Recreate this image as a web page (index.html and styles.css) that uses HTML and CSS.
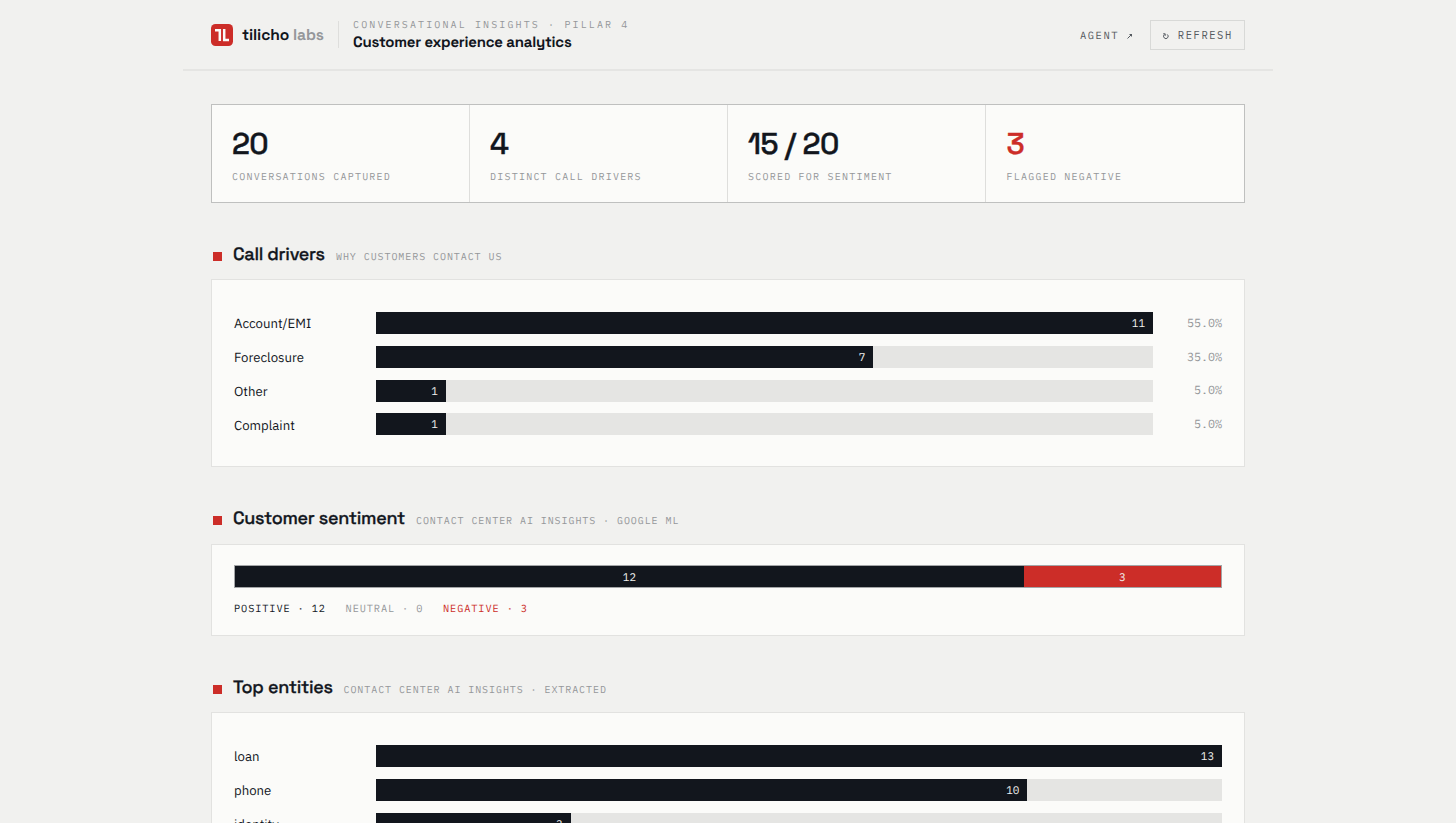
FILE: index.html
```
<!DOCTYPE html>
<html lang="en">
<head>
<meta charset="utf-8">
<title>Customer experience analytics</title>
<link rel="stylesheet" href="styles.css">
</head>
<body>
<header class="header">
  <div class="brand">
    <svg class="mark" width="22" height="22" viewBox="0 0 22 22" fill="none"><rect width="22" height="22" rx="4.5" fill="#cc2d28"/><path d="M4 6.2H8.8V17M13.2 5V15.9H18" stroke="#fbfbf9" stroke-width="2.5"/></svg>
    <span class="wordmark">tilicho <span class="muted">labs</span></span>
  </div>
  <div class="titles">
    <div class="eyebrow">CONVERSATIONAL INSIGHTS · PILLAR 4</div>
    <h1 class="title">Customer experience analytics</h1>
  </div>
  <nav class="actions">
    <a class="link">AGENT <svg class="glyph" width="6" height="8" viewBox="0 0 6 8" fill="none" stroke="currentColor"><path d="M.5 6.5L4.5 2.5"/><path d="M2 2H5V5Z" fill="currentColor" stroke="none"/></svg></a>
    <button class="refresh"><svg class="glyph" width="6" height="8" viewBox="0 0 6 8" fill="none" stroke="currentColor"><path d="M4.2 2.4A2.3 2.3 0 1 1 1.4 2.5M.2 1.8H2.2V3.8"/></svg> REFRESH</button>
  </nav>
</header>
<main class="main">
  <section class="stats">
    <div class="stat"><div class="num">20</div><div class="caption">CONVERSATIONS CAPTURED</div></div>
    <div class="stat"><div class="num">4</div><div class="caption">DISTINCT CALL DRIVERS</div></div>
    <div class="stat"><div class="num">15 / 20</div><div class="caption">SCORED FOR SENTIMENT</div></div>
    <div class="stat"><div class="num red">3</div><div class="caption">FLAGGED NEGATIVE</div></div>
  </section>
  <section class="section">
    <div class="heading"><i class="square"></i><h2 class="h-drivers">Call drivers</h2><span class="sub">WHY CUSTOMERS CONTACT US</span></div>
    <div class="panel chart drivers">
      <div class="row"><span class="label">Account/EMI</span><div class="track"><div class="fill" style="width:100%">11</div></div><span class="pct">55.0%</span></div>
      <div class="row"><span class="label">Foreclosure</span><div class="track"><div class="fill" style="width:64%">7</div></div><span class="pct">35.0%</span></div>
      <div class="row"><span class="label">Other</span><div class="track"><div class="fill" style="width:9%">1</div></div><span class="pct">5.0%</span></div>
      <div class="row"><span class="label">Complaint</span><div class="track"><div class="fill" style="width:9%">1</div></div><span class="pct">5.0%</span></div>
    </div>
  </section>
  <section class="section">
    <div class="heading"><i class="square"></i><h2 class="h-sentiment">Customer sentiment</h2><span class="sub">CONTACT CENTER AI INSIGHTS · GOOGLE ML</span></div>
    <div class="panel sentiment">
      <div class="split"><div class="part" style="width:80%">12</div><div class="part negative" style="width:20%">3</div></div>
      <div class="legend"><span>POSITIVE · 12</span><span class="muted">NEUTRAL · 0</span><span class="red">NEGATIVE · 3</span></div>
    </div>
  </section>
  <section class="section">
    <div class="heading"><i class="square"></i><h2 class="h-entities">Top entities</h2><span class="sub">CONTACT CENTER AI INSIGHTS · EXTRACTED</span></div>
    <div class="panel chart">
      <div class="row"><span class="label">loan</span><div class="track"><div class="fill" style="width:100%">13</div></div></div>
      <div class="row"><span class="label">phone</span><div class="track"><div class="fill" style="width:77%">10</div></div></div>
      <div class="row"><span class="label">identity</span><div class="track"><div class="fill" style="width:23%">3</div></div></div>
    </div>
  </section>
</main>
</body>
</html>
```
FILE: styles.css
```
* { box-sizing: border-box; }
html, body { height: 100%; }
body {
  margin: 0;
  overflow: hidden;
  background: #f1f1ef;
  color: #12161d;
  font-family: "Space Grotesk", Inter, sans-serif;
  text-rendering: geometricPrecision;
}
h1, h2 { margin: 0; font-weight: 600; }
.muted { color: #95979a; }
.red { color: #cc2d28; }

.header {
  width: 1090px;
  height: 71px;
  margin: 0 auto;
  padding: 0 28px;
  border-bottom: 2px solid #e5e5e3;
  display: flex;
  align-items: center;
}
.brand { display: flex; align-items: center; gap: 9px; width: 128px; height: 27px; border-right: 1px solid #dededc; }
.mark { display: block; flex: none; }
.wordmark { font-size: 15.6px; font-weight: 600; line-height: 20px; letter-spacing: -.1px; white-space: nowrap; }
.titles { padding-left: 14px; }
.eyebrow, .caption, .sub, .pct, .fill, .part, .legend, .actions, .refresh {
  font-family: "IBM Plex Mono", "Liberation Mono", monospace;
  white-space: nowrap;
}
.eyebrow { font-size: 10px; line-height: 14px; letter-spacing: 2.13px; color: #95979a; }
.title { padding-top: 1px; margin-bottom: -1px; font-size: 15px; line-height: 20px; letter-spacing: -.23px; }
.actions { margin-left: auto; display: flex; align-items: center; gap: 17px; color: #555a60; font-size: 10.5px; letter-spacing: 1.55px; }
.glyph { display: inline-block; vertical-align: -1px; }
.refresh {
  width: 95px;
  height: 30px;
  padding: 0 0 0 12px;
  border: 1px solid #d8d9d7;
  background: none;
  color: inherit;
  font-size: inherit;
  letter-spacing: inherit;
  word-spacing: 1px;
  text-align: left;
}

.main { width: 1034px; margin: 33px auto 0; }
.stats { display: grid; grid-template-columns: repeat(4, 1fr); height: 99px; border: 1px solid #bfc0bf; background: #fbfbf9; }
.stat { padding: 22px 20px 0; border-right: 1px solid #dededc; }
.stat:last-child { border-right: 0; padding-left: 20.5px; }
.num { font-size: 30px; line-height: 34px; font-weight: 500; letter-spacing: -.62px; -webkit-text-stroke: .4px currentColor; white-space: nowrap; }
.caption { margin-top: 9px; font-size: 10px; line-height: 14px; letter-spacing: 1.23px; color: #95979a; }

.section { margin-top: 41px; }
.heading { display: flex; align-items: baseline; height: 35px; padding-left: 2px; line-height: 22px; }
.square { width: 9px; height: 9px; margin-right: 11px; background: #cc2d28; position: relative; top: 1px; }
.heading h2 { font-size: 18px; font-weight: 500; line-height: 22px; letter-spacing: -.28px; -webkit-text-stroke: .3px currentColor; white-space: nowrap; }
.h-drivers { width: 92px; }
.h-sentiment { width: 172px; }
.h-entities { width: 99.5px; }
.sub { margin-left: 11px; font-size: 10px; letter-spacing: .93px; color: #95979a; }

.panel { border: 1px solid #e2e2e0; background: #fbfbf9; }
.chart { display: flex; flex-direction: column; gap: 11.75px; padding: 32px 22px 31px; }
.drivers { height: 188px; }
.row { display: flex; align-items: center; height: 22px; }
.label { width: 142px; flex: none; padding-top: .9px; font: 13.2px/22px "IBM Plex Sans", "Noto Sans", sans-serif; }
.track { flex: 1; height: 22px; background: #e5e5e3; }
.fill { height: 22px; padding-right: 8px; background: #12161d; color: #f1f1ef; font-size: 11px; line-height: 24px; text-align: right; }
.pct { width: 69px; flex: none; padding-top: .9px; font-size: 11.7px; line-height: 21px; color: #95979a; text-align: right; }

.sentiment { height: 92px; padding: 20px 22px 0; }
.section:nth-child(3) .heading { height: 36px; }
.split { display: flex; height: 23px; border: 1px solid #a3a5a7; }
.part { background: #12161d; color: #f1f1ef; font-size: 11px; line-height: 24px; height: 21px; text-align: center; }
.negative { background: #cc2d28; }
.legend { display: flex; gap: 19.7px; margin-top: 12px; font-size: 10.3px; line-height: 16px; letter-spacing: .89px; }
```
